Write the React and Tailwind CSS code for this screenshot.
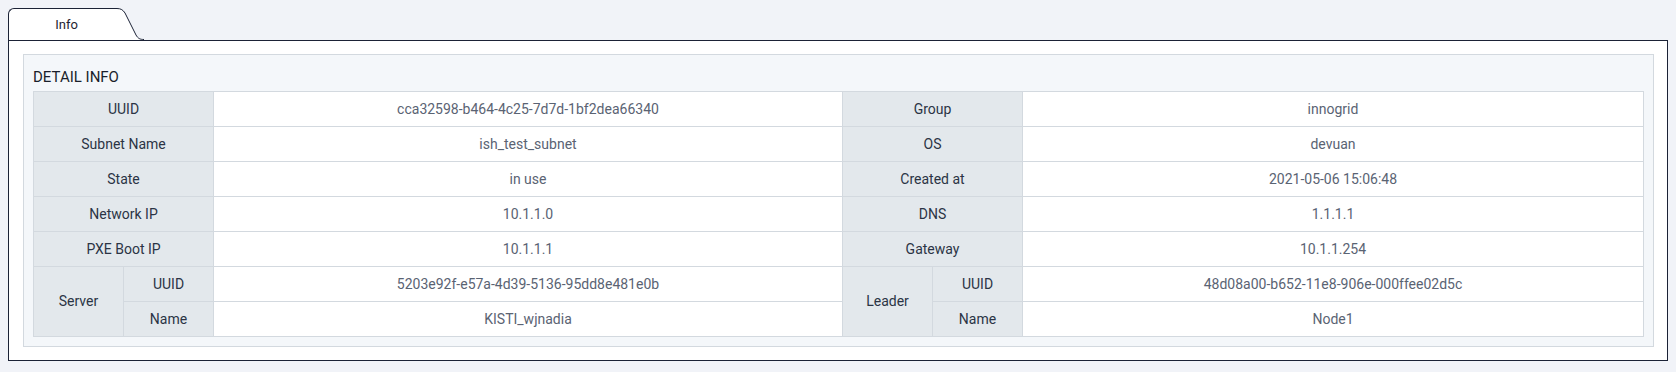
const rowsTop = [
  ["UUID", "cca32598-b464-4c25-7d7d-1bf2dea66340", "Group", "innogrid"],
  ["Subnet Name", "ish_test_subnet", "OS", "devuan"],
  ["State", "in use", "Created at", "2021-05-06 15:06:48"],
  ["Network IP", "10.1.1.0", "DNS", "1.1.1.1"],
  ["PXE Boot IP", "10.1.1.1", "Gateway", "10.1.1.254"],
];

const th = "h-[35px] p-0 border border-[#d3d9df] bg-[#e3e8ec] text-[#2b3445] font-normal text-center";
const td = "h-[35px] p-0 border border-[#d3d9df] bg-white text-[#5a6373] text-center";

function DetailTable() {
  return (
    <table className="w-full table-fixed border-collapse text-[14px]">
      <colgroup>
        <col className="w-[90px]" />
        <col className="w-[90px]" />
        <col className="w-[629px]" />
        <col className="w-[90px]" />
        <col className="w-[90px]" />
        <col />
      </colgroup>
      <tbody>
        {rowsTop.map(([l1, v1, l2, v2]) => (
          <tr key={l1}>
            <th colSpan={2} className={th}>{l1}</th>
            <td className={td}>{v1}</td>
            <th colSpan={2} className={th}>{l2}</th>
            <td className={td}>{v2}</td>
          </tr>
        ))}
        <tr>
          <th rowSpan={2} className={th}>Server</th>
          <th className={th}>UUID</th>
          <td className={td}>5203e92f-e57a-4d39-5136-95dd8e481e0b</td>
          <th rowSpan={2} className={th}>Leader</th>
          <th className={th}>UUID</th>
          <td className={td}>48d08a00-b652-11e8-906e-000ffee02d5c</td>
        </tr>
        <tr>
          <th className={th}>Name</th>
          <td className={td}>KISTI_wjnadia</td>
          <th className={th}>Name</th>
          <td className={td}>Node1</td>
        </tr>
      </tbody>
    </table>
  );
}

export default function App() {
  return (
    <div className="min-h-[372px] bg-[#f1f3f8] px-2 pt-2 pb-[10px] font-['Roboto',sans-serif]">
      {/* tab */}
      <div className="flex items-end h-[32px]">
        <div className="w-[108px] h-[32px] pl-[8px] bg-white border-l border-t border-[#1b2236] rounded-tl-[6px] flex items-center justify-center text-[13px] text-[#1e2433]">
          Info
        </div>
        <svg width="28" height="32" viewBox="0 0 28 32" className="block">
          <path d="M0 0.5 H1 C5 0.5 7 2 9 5 L20 27 C22 30.5 24 31.5 28 31.5 V32 H0 Z" fill="#ffffff" />
          <path d="M0 0.5 H1 C5 0.5 7 2 9 5 L20 27 C22 30.5 24 31.5 28 31.5" fill="none" stroke="#1b2236" strokeWidth="1" />
        </svg>
      </div>
      {/* panel */}
      <div className="bg-white border border-[#1b2236] pl-[14px] pr-[13px] py-[13px]">
        <div className="bg-[#f4f7fa] border border-[#d3d9df] p-[9px]">
          <div className="h-[27px] leading-[27px] text-[15px] text-[#1a1f2b]">DETAIL INFO</div>
          <DetailTable />
        </div>
      </div>
    </div>
  );
}
